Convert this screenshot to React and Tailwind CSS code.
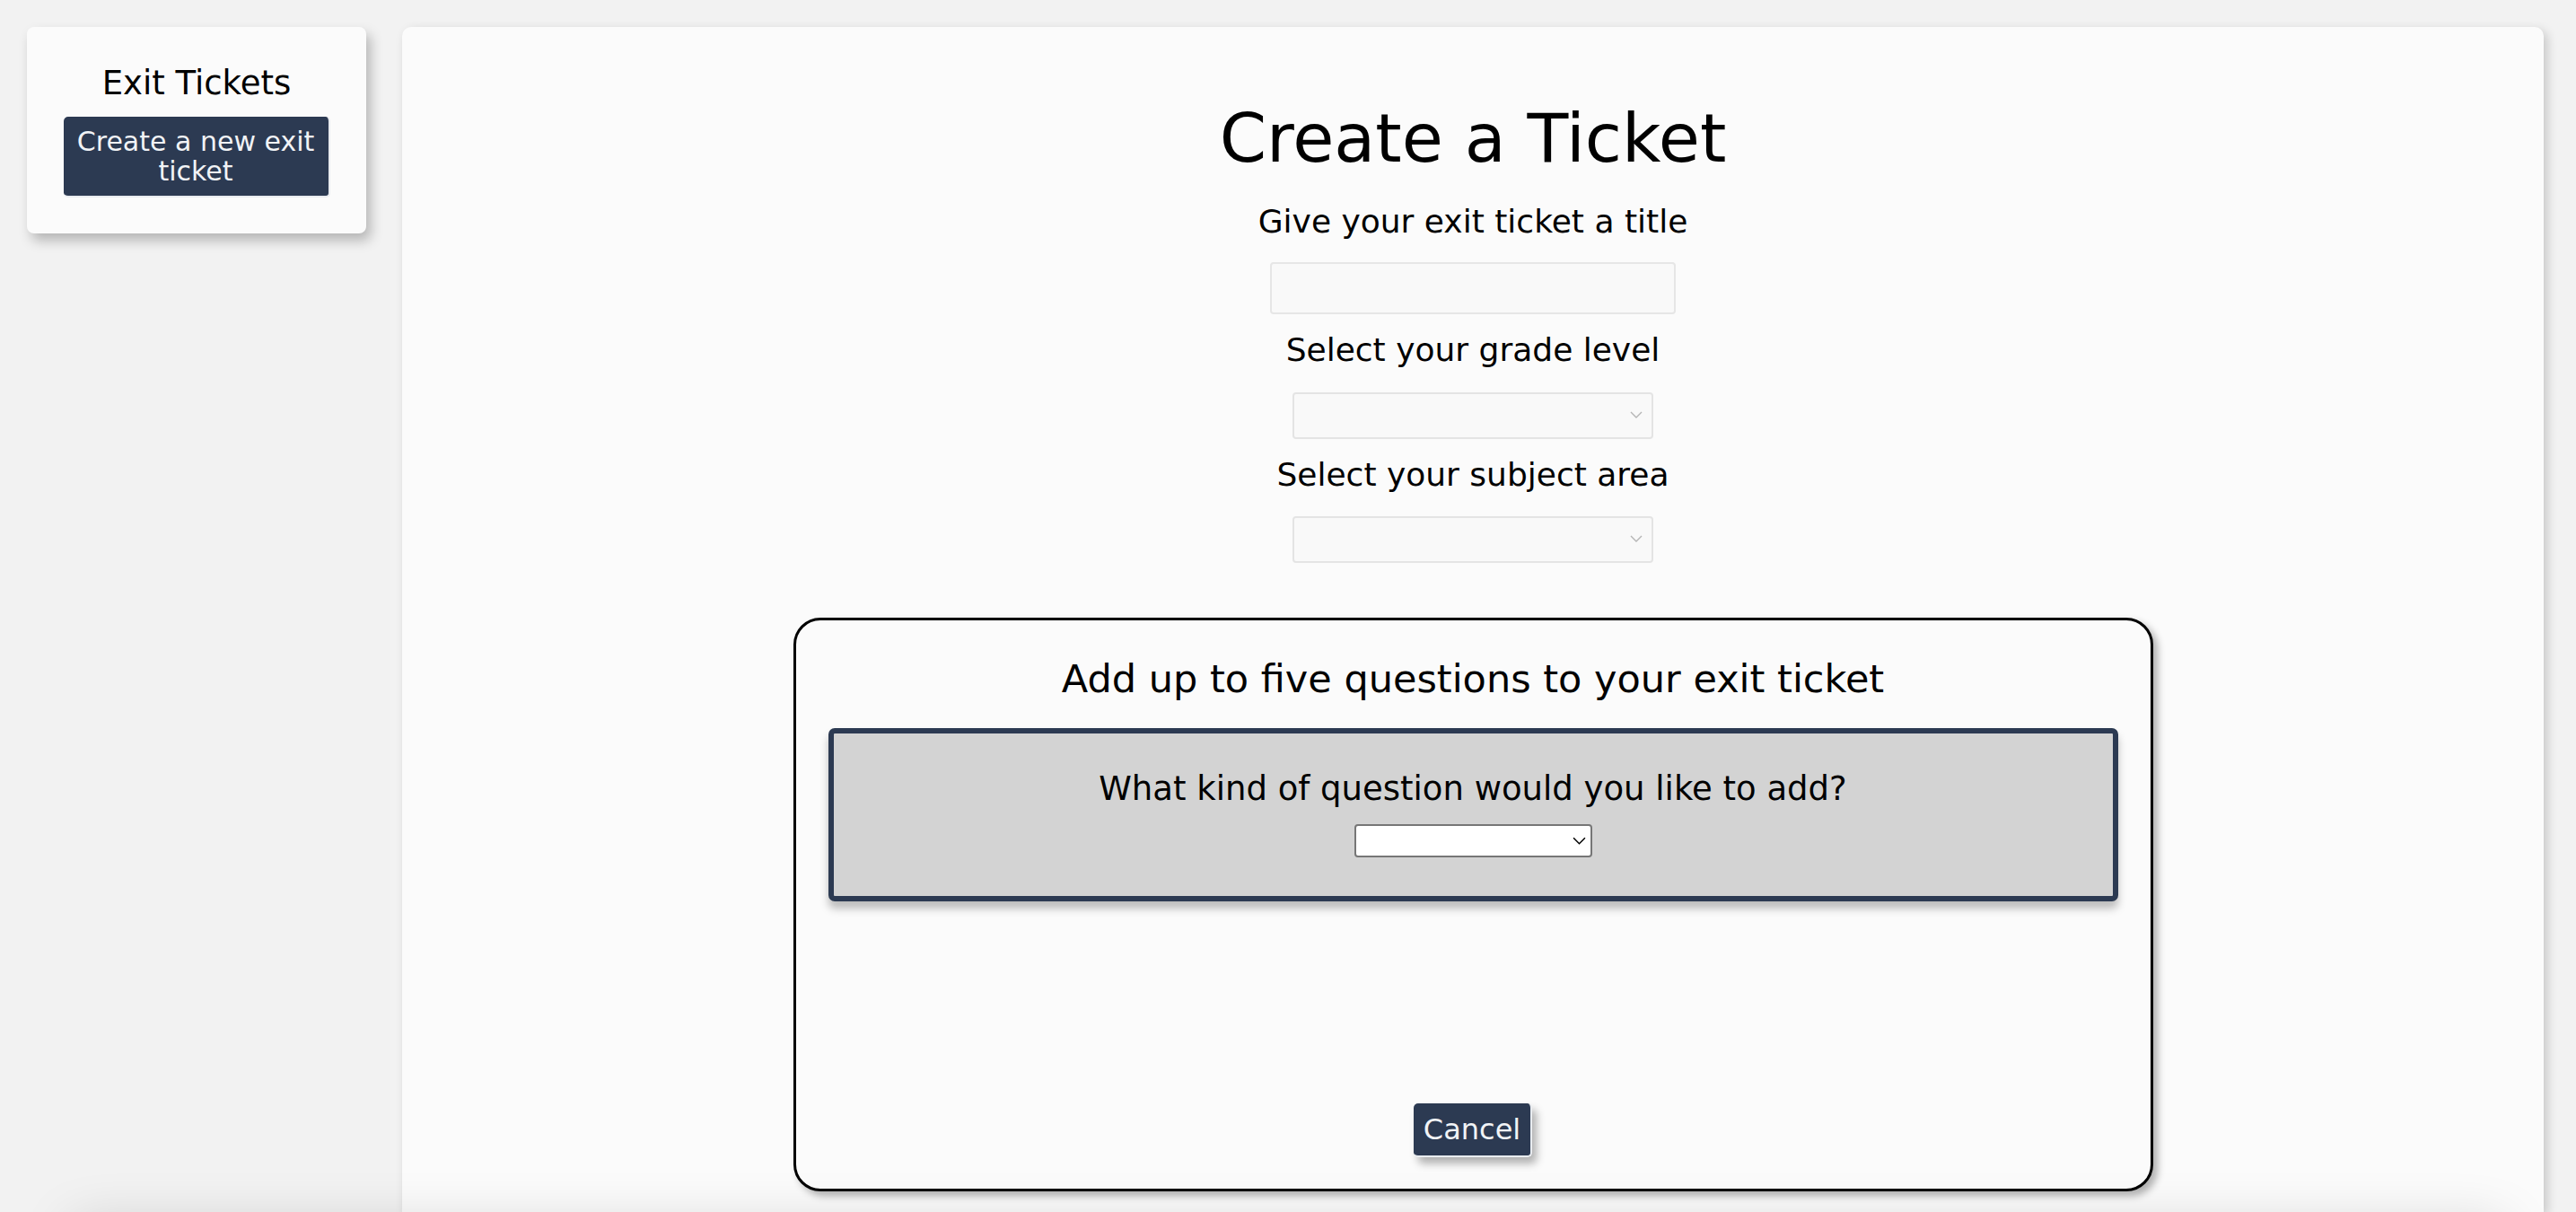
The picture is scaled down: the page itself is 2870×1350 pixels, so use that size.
import React from 'react';

const font = { fontFamily: '"DejaVu Sans", sans-serif' };

const Chevron = ({ className }) => (
  <svg viewBox="0 0 14 8" className={className} fill="none" stroke="currentColor" strokeWidth="1.4">
    <path d="M1 1l6 6 6-6" />
  </svg>
);

const FieldLabel = ({ children }) => (
  <label className="text-[36px] leading-[40px] text-black">{children}</label>
);

const GraySelect = () => (
  <div className="relative w-[402px] h-[52px]">
    <select className="appearance-none w-full h-full bg-[#f9f9f9] border-2 border-[#e4e4e4] rounded-[4px] outline-none" />
    <Chevron className="absolute right-[12px] top-[21px] w-[14px] h-[8px] text-[#b5b5b5] pointer-events-none" />
  </div>
);

const Sidebar = () => (
  <aside className="w-[378px] h-[230px] shrink-0 bg-[#fbfbfb] rounded-[8px] shadow-[5px_8px_14px_rgba(0,0,0,0.25)] px-[40px] pt-[40px] flex flex-col items-center">
    <h2 className="text-[37px] leading-[46px] text-black">Exit Tickets</h2>
    <button className="mt-[14px] w-[297px] h-[90px] bg-[#2c3a52] text-[#f1f3f6] text-[30px] leading-[33px] rounded-[5px] border-r-2 border-b-2 border-[#e9ecf0] px-1">
      Create a new exit ticket
    </button>
  </aside>
);

const QuestionModal = () => (
  <section className="mt-[61px] w-[1515px] h-[639px] border-[3px] border-black rounded-[30px] bg-[#fbfbfb] shadow-[5px_5px_8px_rgba(0,0,0,0.3)] flex flex-col items-center">
    <h3 className="mt-[42px] text-[43px] leading-[46px] text-black">Add up to five questions to your exit ticket</h3>
    <div className="mt-[32px] self-stretch mx-[36px] h-[193px] bg-[#d3d3d3] border-[6px] border-[#2c3a52] rounded-[7px] shadow-[0_8px_10px_rgba(0,0,0,0.25)] flex flex-col items-center">
      <p className="mt-[41px] text-[37px] leading-[42px] text-black">What kind of question would you like to add?</p>
      <div className="relative mt-[18px] w-[265px] h-[37px]">
        <select className="appearance-none w-full h-full bg-white border-2 border-[#767676] rounded-[4px] outline-none" />
        <Chevron className="absolute right-[7px] top-[14px] w-[15px] h-[9px] text-black pointer-events-none" />
      </div>
    </div>
    <button className="mt-auto mb-[35px] w-[132px] h-[60px] bg-[#2c3a52] text-[#f1f3f6] text-[32px] leading-[36px] rounded-[5px] border-r-2 border-b-2 border-[#e9ecf0] shadow-[5px_7px_10px_rgba(0,0,0,0.3)]">
      Cancel
    </button>
  </section>
);

export default function App() {
  return (
    <div className="relative w-[2870px] h-[1350px] overflow-hidden bg-[#f2f2f2] flex gap-[40px] pl-[30px] pr-[36px] pt-[30px]" style={font}>
      <Sidebar />
      <main className="flex-1 bg-[#fbfbfb] rounded-t-[10px] shadow-[4px_4px_12px_rgba(0,0,0,0.18)] flex flex-col items-center pt-[81px]">
        <h1 className="text-[75px] leading-[86px] text-black">Create a Ticket</h1>
        <div className="mt-[30px] flex flex-col items-center">
          <FieldLabel>Give your exit ticket a title</FieldLabel>
          <input className="mt-[25px] w-[452px] h-[58px] bg-[#f9f9f9] border-2 border-[#e6e6e6] rounded-[4px] outline-none" />
        </div>
        <div className="mt-[20px] flex flex-col items-center">
          <FieldLabel>Select your grade level</FieldLabel>
          <div className="mt-[27px]"><GraySelect /></div>
        </div>
        <div className="mt-[20px] flex flex-col items-center">
          <FieldLabel>Select your subject area</FieldLabel>
          <div className="mt-[26px]"><GraySelect /></div>
        </div>
        <QuestionModal />
      </main>
      <div className="absolute left-[80px] right-[80px] top-[1385px] h-[40px] shadow-[0_-20px_60px_rgba(0,0,0,0.18)]" />
    </div>
  );
}
